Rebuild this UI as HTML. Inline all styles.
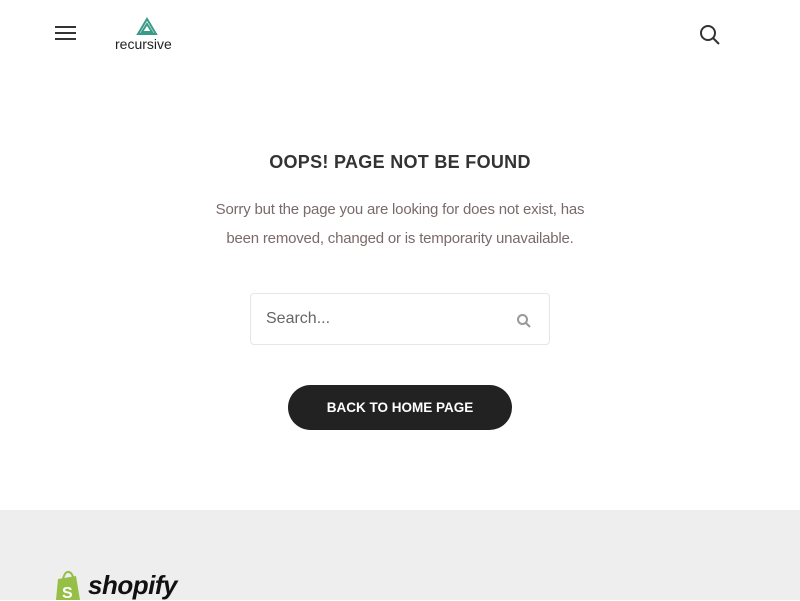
<!DOCTYPE html>
<html><head><meta charset="utf-8"><style>
*{margin:0;padding:0;box-sizing:border-box}
body{width:800px;height:600px;overflow:hidden;background:#fff;font-family:"Liberation Sans",sans-serif;position:relative}
.abs{position:absolute}
h1{position:absolute;top:152px;left:0;width:800px;text-align:center;font-size:18px;font-weight:bold;color:#333;letter-spacing:0.3px}
.p{position:absolute;top:195px;left:0;width:800px;text-align:center;font-size:15px;line-height:29px;color:#7a6a6a;letter-spacing:-0.2px}
.search{position:absolute;left:250px;top:293px;width:300px;height:52px;border:1px solid #e6e6e6;border-radius:4px}
.search span{position:absolute;left:15px;top:16px;font-size:16px;color:#666}
.btn{position:absolute;left:288px;top:385px;width:224px;height:45px;border-radius:23px;background:#222;color:#fff;font-weight:bold;font-size:13.5px;text-align:center;line-height:45px}
.foot{position:absolute;left:0;top:510px;width:800px;height:90px;background:#eeeeee}
</style></head><body>
<div class="abs" style="left:55px;top:26px;width:21px;height:2px;background:#333"></div>
<div class="abs" style="left:55px;top:32px;width:21px;height:2px;background:#333"></div>
<div class="abs" style="left:55px;top:38px;width:21px;height:2px;background:#333"></div>
<svg class="abs" style="left:136px;top:17px" width="22" height="20" viewBox="0 0 22 20"><path d="M11 2 L20 17 L2 17 Z M11 7 L16 15 L6 15 Z" fill="none" stroke="#3a9a88" stroke-width="2"/></svg>
<div class="abs" style="left:115px;top:36px;font-size:14px;color:#222">recursive</div>
<svg class="abs" style="left:698px;top:23px" width="24" height="24" viewBox="0 0 24 24"><circle cx="10" cy="10" r="7" fill="none" stroke="#333" stroke-width="2"/><path d="M15 15 L21 21" stroke="#333" stroke-width="2"/></svg>
<h1>OOPS! PAGE NOT BE FOUND</h1>
<div class="p">Sorry but the page you are looking for does not exist, has<br>been removed, changed or is temporarity unavailable.</div>
<div class="search"><span>Search...</span>
<svg class="abs" style="left:265px;top:19px" width="16" height="16" viewBox="0 0 16 16"><circle cx="6.5" cy="6.5" r="4.5" fill="none" stroke="#999" stroke-width="2"/><path d="M10 10 L14 14" stroke="#999" stroke-width="2"/></svg></div>
<div class="btn">BACK TO HOME PAGE</div>
<div class="foot">
<svg class="abs" style="left:54px;top:59px" width="30" height="31" viewBox="0 0 30 31"><path d="M4 10 L22 7 L26 31 L2 31 Z" fill="#95bf47"/><path d="M9 10 Q11 2 15 3 Q18 4 19 8" fill="none" stroke="#95bf47" stroke-width="2"/><text x="8" y="29" font-size="16" font-weight="bold" fill="#fff" font-family="Liberation Sans">S</text></svg>
<div class="abs" style="left:88px;top:60px;font-size:26px;font-weight:bold;font-style:italic;color:#111;letter-spacing:-0.5px">shopify</div>
</div>
</body></html>
